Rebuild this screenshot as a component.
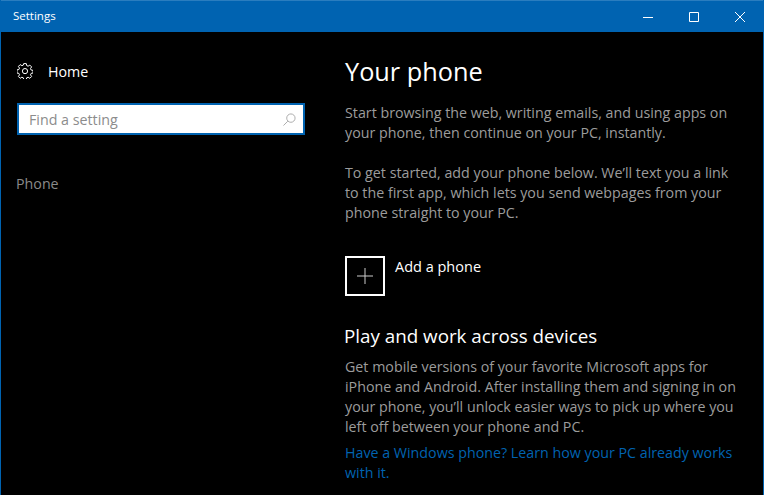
<style>
	:global(body) {
		margin: 0;
		background: #000;
	}

	.window {
		width: 764px;
		height: 495px;
		box-sizing: border-box;
		border-left: 1px solid #0063b1;
		border-right: 1px solid #0063b1;
		background: #000;
		color: #fff;
		font-family: 'Open Sans', 'Liberation Sans', sans-serif;
		overflow: hidden;
		display: flex;
		flex-direction: column;
	}

	.titlebar {
		height: 32px;
		flex: none;
		box-sizing: border-box;
		border-top: 1px solid #2a7dbf;
		background: #0063b1;
		display: flex;
		align-items: center;
		padding: 0 1px 0 13px;
		font-size: 11.5px;
		margin: 0 -1px;
	}

	.title {
		flex: 1;
		margin-bottom: 3px;
	}

	.winbtn {
		width: 46px;
		height: 30px;
		display: flex;
		align-items: center;
		justify-content: center;
	}

	.body {
		flex: 1;
		display: flex;
		min-height: 0;
	}

	.side {
		width: 344px;
		flex: none;
		box-sizing: border-box;
		padding: 28px 0 0 16px;
	}

	.home {
		display: flex;
		align-items: center;
		gap: 15px;
		height: 22px;
		font-size: 14.25px;
	}

	.search {
		width: 288px;
		height: 32px;
		box-sizing: border-box;
		margin-top: 21px;
		border: 2px solid #0063b1;
		background: #fff;
		display: flex;
		align-items: center;
		justify-content: space-between;
		padding: 0 7px 0 10px;
		color: #8c8c8c;
		font-size: 14.25px;
	}

	.nav {
		margin: 39px 0 0 -1px;
		color: #8a8a8a;
		font-size: 14.25px;
		line-height: 20px;
	}

	.main {
		flex: 1;
		padding-top: 19px;
		font-size: 14.25px;
		line-height: 20px;
		color: #9c9c9c;
	}

	h1 {
		margin: 0;
		font-size: 25.3px;
		font-weight: 400;
		line-height: 40px;
		color: #fff;
	}

	p {
		margin: 0;
	}

	.first {
		margin-top: 12px;
	}

	.second {
		margin-top: 20px;
	}

	.add {
		display: flex;
		gap: 10px;
		margin-top: 33px;
		color: #fff;
	}

	.plus {
		width: 40px;
		height: 40px;
		box-sizing: border-box;
		border: 2px solid #fff;
		display: flex;
		align-items: center;
		justify-content: center;
	}

	.addlabel {
		font-size: 14.5px;
		line-height: 20px;
		margin-top: 1px;
	}

	h2 {
		margin: 25px 0 0 -1px;
		font-size: 18.8px;
		font-weight: 400;
		line-height: 30px;
		color: #fff;
	}

	.get {
		margin-top: 6px;
	}

	.link {
		color: #0063b1;
		margin-top: 6px;
	}
</style>

<div class="window">
	<div class="titlebar">
		<span class="title">Settings</span>
		<div class="winbtn">
			<svg width="10" height="10" viewBox="0 0 10 10"><path d="M0 5.5h10" stroke="#fff" fill="none" /></svg>
		</div>
		<div class="winbtn">
			<svg width="10" height="10" viewBox="0 0 10 10"><path d="M.5.5h9v9h-9z" stroke="#fff" fill="none" /></svg>
		</div>
		<div class="winbtn">
			<svg width="10" height="10" viewBox="0 0 10 10"><path d="M0 0l10 10M10 0L0 10" stroke="#fff" fill="none" /></svg>
		</div>
	</div>
	<div class="body">
		<div class="side">
			<div class="home">
				<svg width="16" height="16" viewBox="0 0 16 16">
					<path
						d="M6.7.6h2.6l.4 2 1.4.6 1.7-1.1 1.8 1.8-1.1 1.7.6 1.4 2 .4v2.6l-2 .4-.6 1.4 1.1 1.7-1.8 1.8-1.7-1.1-1.4.6-.4 2H6.7l-.4-2-1.4-.6-1.7 1.1-1.8-1.8 1.1-1.7-.6-1.4-2-.4V6.9l2-.4.6-1.4-1.1-1.7 1.8-1.8 1.7 1.1 1.4-.6z"
						fill="none"
						stroke="#fff"
						stroke-width="1"
					/>
					<circle cx="8" cy="8.1" r="2.6" fill="none" stroke="#fff" />
				</svg>
				<span>Home</span>
			</div>
			<div class="search">
				<span>Find a setting</span>
				<svg width="13" height="13" viewBox="0 0 14 14">
					<circle cx="8.5" cy="5.5" r="4.5" fill="none" stroke="#a6a6a6" />
					<path d="M5.2 8.8L.5 13.5" stroke="#a6a6a6" fill="none" />
				</svg>
			</div>
			<div class="nav">Phone</div>
		</div>
		<div class="main">
			<h1>Your phone</h1>
			<p class="first">Start browsing the web, writing emails, and using apps on<br />your phone, then continue on your PC, instantly.</p>
			<p class="second">To get started, add your phone below. We’ll text you a link<br />to the first app, which lets you send webpages from your<br />phone straight to your PC.</p>
			<div class="add">
				<div class="plus">
					<svg width="16" height="16" viewBox="0 0 16 16"><path d="M8 0v16M0 8h16" stroke="#ccc" fill="none" /></svg>
				</div>
				<span class="addlabel">Add a phone</span>
			</div>
			<h2>Play and work across devices</h2>
			<p class="get">Get mobile versions of your favorite Microsoft apps for<br />iPhone and Android. After installing them and signing in on<br />your phone, you’ll unlock easier ways to pick up where you<br />left off between your phone and PC.</p>
			<p class="link">Have a Windows phone? Learn how your PC already works<br />with it.</p>
		</div>
	</div>
</div>
